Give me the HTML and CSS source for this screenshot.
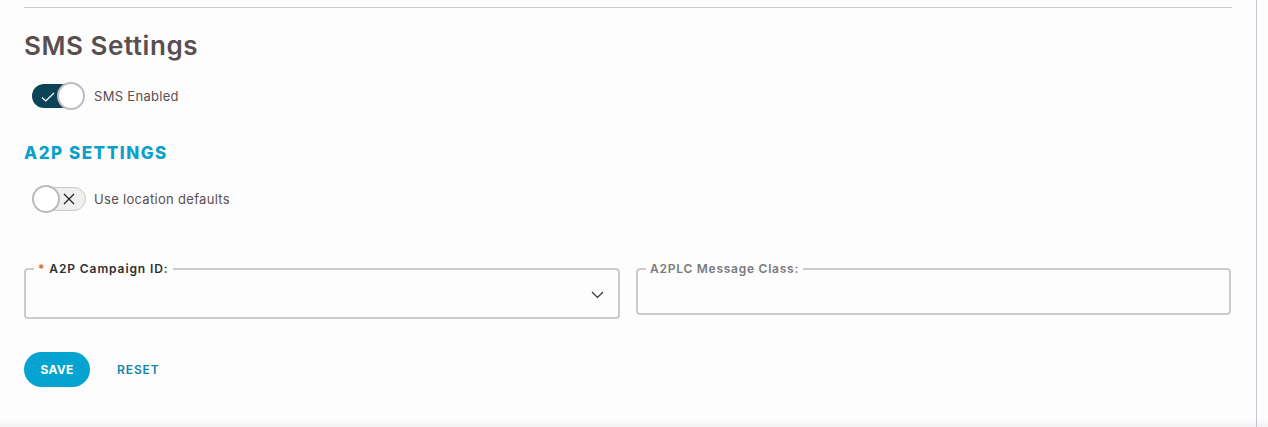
FILE: index.html
```html
<!DOCTYPE html>
<html lang="en">
<head>
<meta charset="utf-8">
<link rel="stylesheet" href="styles.css">
</head>
<body>
<div class="page">
  <main class="content">
    <hr class="divider">
    <h1 class="title">SMS Settings</h1>
    <div class="toggle-row">
      <span class="switch on">
        <svg class="switch-icon check" width="14" height="10" viewBox="0 0 14 10"><path d="M1 5.5 L4.8 9 L13 1" fill="none" stroke="#fff" stroke-width="1.2"/></svg>
        <span class="knob"></span>
      </span>
      <span class="toggle-label">SMS Enabled</span>
    </div>
    <h2 class="section">A2P SETTINGS</h2>
    <div class="toggle-row">
      <span class="switch off">
        <span class="knob"></span>
        <svg class="switch-icon cross" width="12" height="12" viewBox="0 0 12 12"><path d="M1 1 L11 11 M11 1 L1 11" fill="none" stroke="#222" stroke-width="1.2"/></svg>
      </span>
      <span class="toggle-label">Use location defaults</span>
    </div>
    <div class="fields">
      <fieldset class="field">
        <legend class="legend dark"><span class="req">*</span> A2P Campaign ID:</legend>
        <div class="field-body">
          <svg class="chevron" width="13" height="8" viewBox="0 0 13 8"><path d="M1 1 L6.5 6.5 L12 1" fill="none" stroke="#333" stroke-width="1.2"/></svg>
        </div>
      </fieldset>
      <fieldset class="field short">
        <legend class="legend muted">A2PLC Message Class:</legend>
        <div class="field-body"></div>
      </fieldset>
    </div>
    <div class="actions">
      <button class="btn-save">SAVE</button>
      <button class="btn-reset">RESET</button>
    </div>
  </main>
</div>
</body>
</html>
```

FILE: styles.css
```css
* { box-sizing: border-box; }
html, body { margin: 0; padding: 0; }
body {
  font-family: Inter, "Open Sans", sans-serif;
  background: #fdfdfd;
  height: 427px;
  overflow: hidden;
}
.page {
  display: flex;
  height: 427px;
  background: linear-gradient(to bottom, #fdfdfd 0, #fdfdfd 418px, #f3f3f3 427px);
}
.content {
  width: 1257px;
  border-right: 1px solid #c4c5d3;
  padding: 7px 24px 0 24px;
}
.divider {
  margin: 0;
  border: 0;
  border-top: 1px solid #c9c9d1;
}
.title {
  margin: 23px 0 0 0;
  font-size: 26px;
  line-height: 30px;
  font-weight: 600;
  color: #5a4e50;
  letter-spacing: 0.55px;
}
.toggle-row {
  display: flex;
  align-items: center;
  gap: 8px;
  padding-left: 8px;
  height: 28px;
}
.title + .toggle-row { margin-top: 21px; }
.switch {
  position: relative;
  width: 54px;
  height: 28px;
  display: flex;
  align-items: center;
}
.switch::before {
  content: "";
  position: absolute;
  left: 0; right: 0; top: 2px; bottom: 2px;
  border-radius: 12px;
}
.switch.on::before { background: #0c4457; right: 4px; }
.switch.off::before { background: #efefef; border: 1.5px solid #c9c9c9; }
.knob {
  position: absolute;
  top: 0;
  width: 28px;
  height: 28px;
  border-radius: 50%;
  background: #fff;
  border: 2px solid #bcbcbc;
}
.switch.on .knob { left: 25px; }
.switch.off .knob { left: 0; }
.switch-icon { position: absolute; }
.check { left: 9px; top: 10px; }
.cross { left: 31px; top: 8px; }
.toggle-label {
  font-size: 13px;
  color: #5a4e50;
  letter-spacing: 0.3px;
}
.section {
  margin: 33px 0 0 0;
  font-size: 17px;
  line-height: 20px;
  font-weight: 800;
  color: #0aa0cb;
  letter-spacing: 1.55px;
}
.section + .toggle-row { margin-top: 22px; }
.fields {
  display: flex;
  gap: 16px;
  margin-top: 49px;
}
.field {
  margin: 0;
  padding: 0;
  min-width: 0;
  border: 2px solid #cbcbcb;
  border-radius: 4px;
  flex: 0 0 596px;
  height: 57px;
  position: relative;
}
.field.short { flex: 0 0 595px; height: 53px; }
.legend {
  margin-left: 8px;
  padding: 0 4px;
  font-size: 12px;
  font-weight: 600;
  letter-spacing: 0.9px;
  line-height: 14px;
}
.legend.dark { color: #2f2f33; }
.legend.muted { color: #7a7a7c; letter-spacing: 0.75px; }
.req { color: #e05a2a; }
.field-body {
  height: 100%;
  display: flex;
  align-items: center;
  justify-content: flex-end;
  padding-right: 14px;
}
.chevron { margin-top: -4px; }
.actions {
  display: flex;
  align-items: center;
  gap: 2px;
  margin-top: 33px;
}
.btn-save {
  width: 66px;
  height: 35px;
  border: 0;
  border-radius: 18px;
  background: #05a3cf;
  color: #fff;
  font-family: inherit;
  font-size: 12px;
  font-weight: 700;
  letter-spacing: 0.3px;
  cursor: pointer;
}
.btn-reset {
  border: 0;
  background: transparent;
  color: #0d86a8;
  font-family: inherit;
  font-size: 12px;
  font-weight: 600;
  letter-spacing: 0.9px;
  padding: 0 25px;
  height: 35px;
  cursor: pointer;
}
```
